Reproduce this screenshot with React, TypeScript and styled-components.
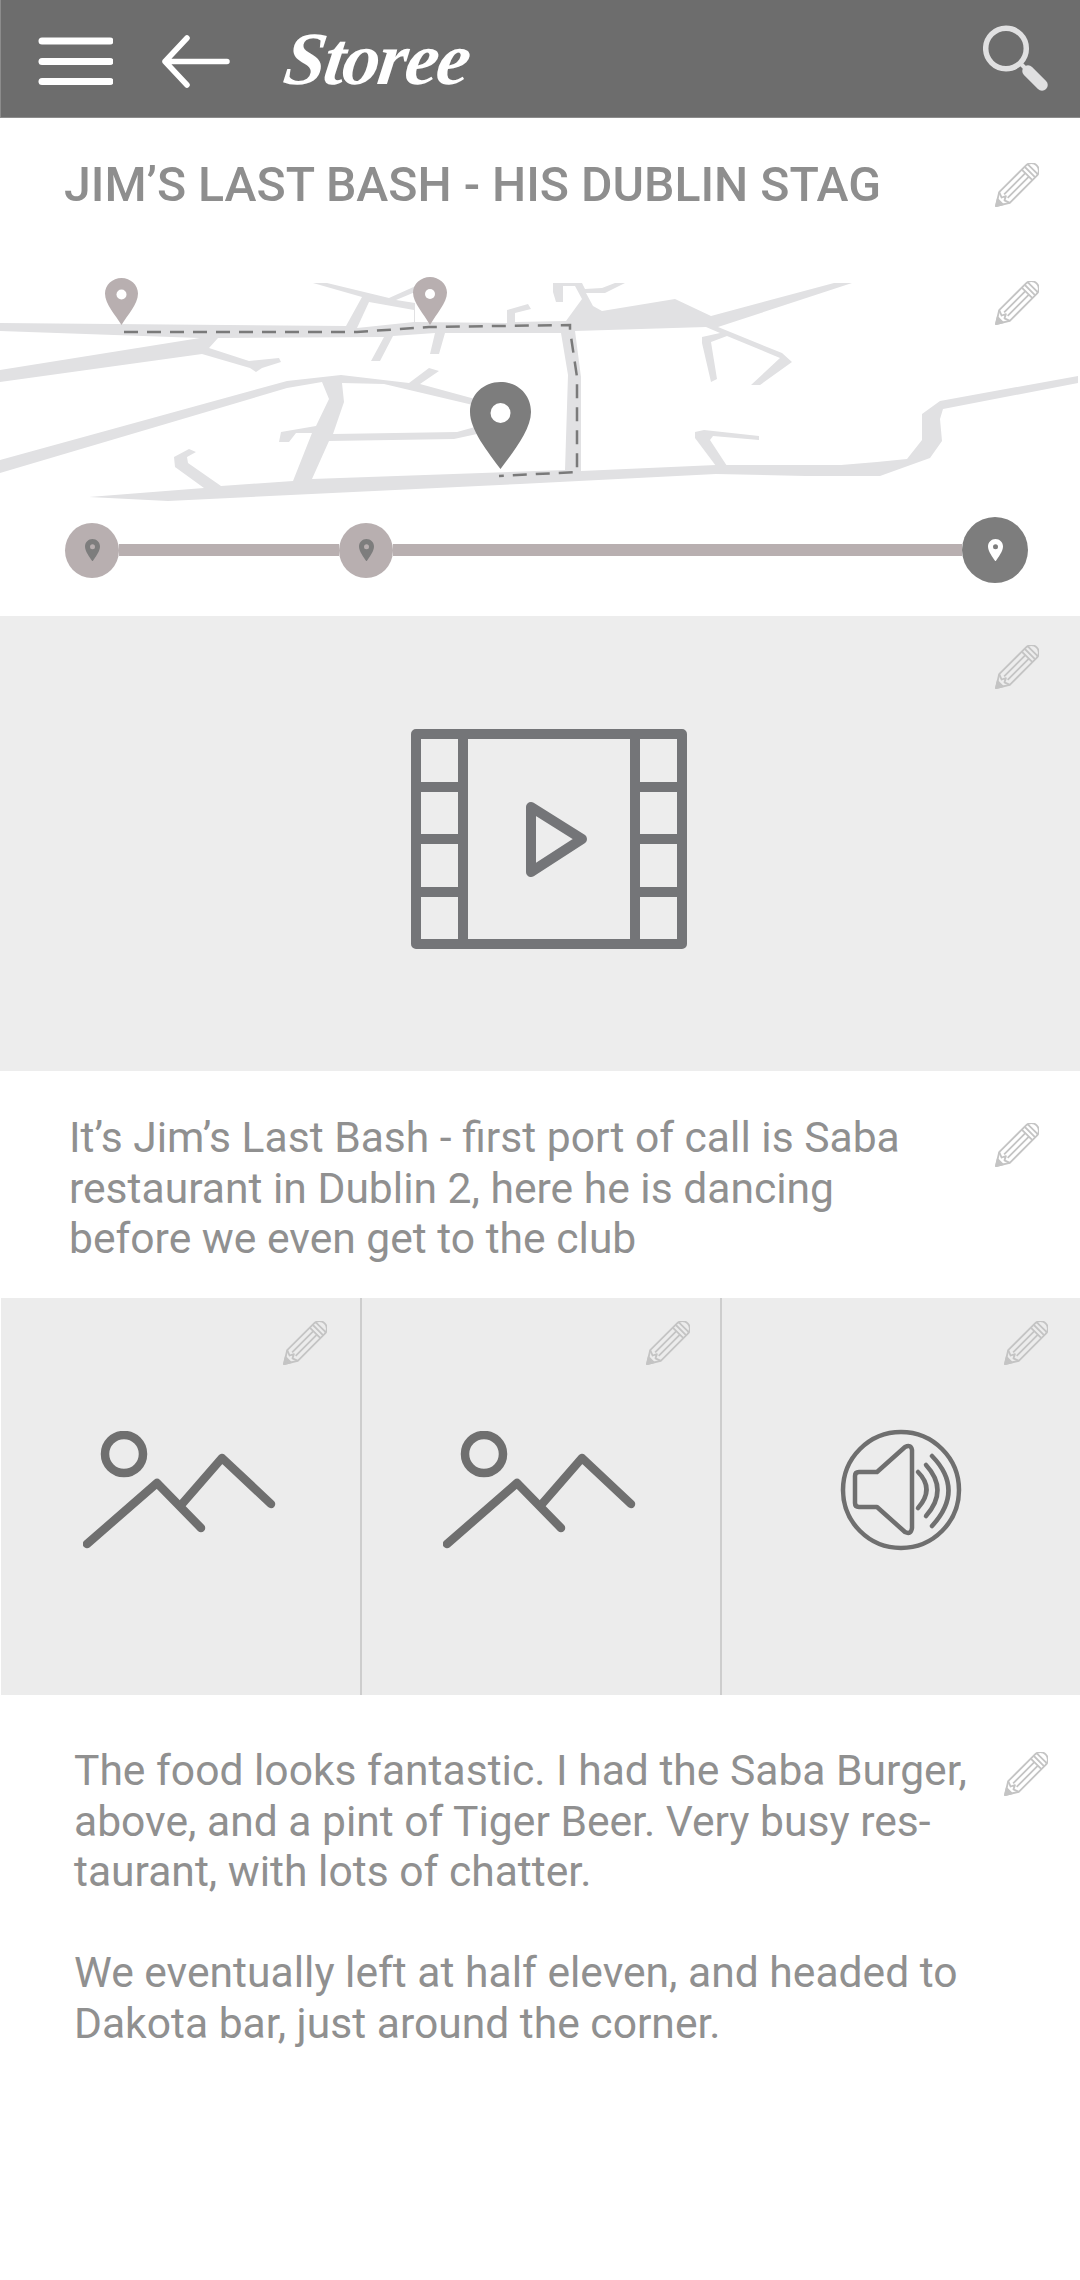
import React from 'react';
import styled, { createGlobalStyle } from 'styled-components';

const GlobalStyle = createGlobalStyle`
  html, body {
    margin: 0;
    padding: 0;
    background: #fff;
  }
  * {
    box-sizing: border-box;
  }
`;

const Page = styled.div`
  width: 1080px;
  height: 2280px;
  background: #fff;
  font-family: Roboto, sans-serif;
  overflow: hidden;
`;

const Header = styled.header`
  height: 118px;
  background: #6d6d6d;
  border-bottom: 1px solid #8c8c8c;
  border-left: 1px solid #8c8c8c;
  display: flex;
  align-items: center;
  padding: 0 31px 0 36px;
`;

const Logo = styled.div`
  margin-left: 55px;
  color: #fff;
  font-family: "Liberation Serif", serif;
  font-style: italic;
  font-weight: 700;
  font-size: 75px;
  line-height: 1;
  letter-spacing: -2px;
  transform: skewX(-8deg);
`;

const HeaderSpacer = styled.div`
  flex: 1;
`;

const Section = styled.section<{ $height: number }>`
  position: relative;
  height: ${({ $height }) => $height}px;
`;

const Title = styled.h1`
  margin: 0;
  padding: 39px 0 0 64px;
  color: #8e8e8e;
  font-size: 48.2px;
  font-weight: 500;
  line-height: 56px;
  white-space: nowrap;
`;

const Edit = styled.div<{ $top: number; $right: number }>`
  position: absolute;
  top: ${({ $top }) => $top}px;
  right: ${({ $right }) => $right}px;
  width: 44px;
  height: 44px;
`;

const MapBlock = styled.div`
  height: 246px;
`;

const Timeline = styled.div`
  height: 108px;
  padding: 0 52px 24px 65px;
  display: flex;
  align-items: center;
`;

const Stop = styled.div<{ $active?: boolean }>`
  width: ${({ $active }) => ($active ? 66 : 54)}px;
  height: ${({ $active }) => ($active ? 66 : 55)}px;
  flex: none;
  border-radius: 50%;
  background: ${({ $active }) => ($active ? '#7d7d7d' : '#b8afb0')};
  display: flex;
  align-items: center;
  justify-content: center;
`;

const Track = styled.div<{ $width?: number }>`
  flex: ${({ $width }) => ($width ? `0 0 ${$width}px` : '1')};
  height: 12px;
  background: #b8afb0;
`;

const VideoBlock = styled.section`
  position: relative;
  height: 455px;
  background: #ededed;
  display: flex;
  justify-content: center;
  padding: 113px 0 0 18px;
`;

const Paragraph = styled.p<{ $left: number }>`
  margin: 0;
  padding-left: ${({ $left }) => $left}px;
  color: #909090;
  font-size: 42.6px;
  font-weight: 400;
  line-height: 50.5px;
  white-space: pre-line;
`;

const TextBlock = styled.section<{ $height: number; $top: number }>`
  position: relative;
  height: ${({ $height }) => $height}px;
  padding-top: ${({ $top }) => $top}px;
`;

const MediaGrid = styled.section`
  height: 397px;
  display: grid;
  grid-template-columns: 362px 360px 358px;
`;

const MediaCell = styled.div<{ $pad: number; $top: number }>`
  position: relative;
  background: #ececec;
  border-right: 2px solid #cdcdcd;
  border-left: 1px solid #ececec;
  padding: ${({ $top }) => $top}px 0 0 ${({ $pad }) => $pad}px;
  &:nth-child(1) {
    border-left-color: #fff;
  }
  &:last-child {
    border-right: none;
  }
`;

const MenuIcon = () => (
  <svg width="76" height="56" viewBox="0 -6 76 56">
    <g stroke="#fff" strokeWidth="7" strokeLinecap="round">
      <line x1="5" y1="4" x2="73" y2="4" />
      <line x1="5" y1="24.5" x2="73" y2="24.5" />
      <line x1="5" y1="44.5" x2="73" y2="44.5" />
    </g>
  </svg>
);

const BackIcon = () => (
  <svg width="68" height="60" viewBox="0 -6 68 60" style={{ marginLeft: 49 }}>
    <path
      d="M25 3 L3 26.5 L25 50 M3 26.5 H65"
      fill="none"
      stroke="#fff"
      strokeWidth="5.5"
      strokeLinecap="round"
      strokeLinejoin="round"
    />
  </svg>
);

const SearchIcon = () => (
  <svg width="66" height="68" viewBox="0 0 66 68">
    <circle cx="23" cy="23.5" r="20.3" fill="none" stroke="#e0e0e1" strokeWidth="5.5" />
    <path d="M37 38 L43 44" stroke="#e0e0e1" strokeWidth="4" />
    <path d="M45 46 L59 60" stroke="#e0e0e1" strokeWidth="11.5" strokeLinecap="round" />
  </svg>
);

const PencilIcon = () => (
  <svg width="44" height="44" viewBox="0 0 44 44">
    <g
      transform="translate(1 43) rotate(-45)"
      fill="none"
      stroke="#c4c4c4"
      strokeWidth="1.8"
      strokeLinejoin="round"
    >
      <path d="M0 0 L12 -7.5 H50 A7.5 7.5 0 0 1 50 7.5 H12 Z" />
      <path d="M12 -7.5 L10 -2 L14 0 L10 2 L12 7.5" />
      <path d="M14 -2.5 H44 M14 2.5 H44" />
      <path d="M44 -7.5 V7.5 M48 -7.5 V7.5 M52 -7 V7" />
      <path d="M0 0 L6 -3.7 V3.7 Z" fill="#c4c4c4" />
    </g>
  </svg>
);

const Pin = ({ size, fill, hole }: { size: number; fill: string; hole: string }) => (
  <svg width={size} height={size * 1.5} viewBox="0 0 30 45">
    <path
      d="M15 0 C6.7 0 0 6.7 0 15 C0 25 10 37 15 45 C20 37 30 25 30 15 C30 6.7 23.3 0 15 0 Z"
      fill={fill}
    />
    <circle cx="15" cy="15.5" r="5" fill={hole} />
  </svg>
);

const roads = [
  '0,323 346,326 362,297 313,283 327,283 389,298 418,285 420,290 396,300 415,303 415,322 507,323 507,310 528,304 531,309 515,313 515,322 566,321 574,310 582,299 575,286 563,286 563,302 556,302 553,292 553,283 582,283 585,289 602,288 615,283 625,283 605,293 586,293 593,306 602,311 675,299 711,316 834,283 852,283 718,327 782,353 792,362 760,385 751,385 780,358 727,336 711,342 717,379 711,382 702,343 702,337 720,333 706,327 575,331 581,377 581,471 716,465 841,465 877,462 907,459 922,440 922,414 940,401 1078,376 1078,383 943,409 940,419 942,441 930,458 880,476 806,476 716,474 520,484 168,501 89,497 204,488 175,467 174,457 189,449 196,452 187,457 188,463 221,486 293,481 312,433 296,433 289,442 279,442 281,432 316,426 329,399 322,382 287,388 0,473 0,460 287,381 341,375 409,383 429,368 439,371 420,384 475,399 473,405 384,384 342,383 344,402 333,434 457,432 475,427 477,434 454,439 329,441 312,479 565,470 568,375 561,333 445,333 439,354 430,354 435,333 393,336 380,361 371,361 384,337 218,338 209,348 249,361 279,358 281,362 262,368 256,372 250,368 202,354 0,382 0,370 200,338 0,331',
  '695,432 704,430 759,436 759,440 713,436 710,440 727,466 716,466 695,438',
];

const holes = ['369,302 414,310 414,322 357,328'];

const RouteMap = () => (
  <svg width="1080" height="246" viewBox="0 262 1080 246" style={{ display: 'block' }}>
    {roads.map(points => (
      <polygon key={points} points={points} fill="#e1e1e3" />
    ))}
    {holes.map(points => (
      <polygon key={points} points={points} fill="#fff" />
    ))}
    <path
      d="M124 332 H357 L429 327 L570 325 V330 L577 377 V472 L499 476"
      fill="none"
      stroke="#7a7a7a"
      strokeWidth="2.5"
      strokeDasharray="14 9"
    />
    <g transform="translate(105 278)">
      <path d="M16.5 0 C7.5 0 0 7 0 15.5 C0 26 10.5 37 16.5 47 C22.5 37 33 26 33 15.5 C33 7 25.5 0 16.5 0 Z" fill="#b8afb0" />
      <circle cx="16.5" cy="16.5" r="5" fill="#fff" />
    </g>
    <g transform="translate(413 277)">
      <path d="M17 0 C8 0 0 7 0 15.5 C0 26 11 37 17 48 C23 37 34 26 34 15.5 C34 7 26 0 17 0 Z" fill="#b8afb0" />
      <circle cx="17" cy="17" r="5" fill="#fff" />
    </g>
    <g transform="translate(470 382)">
      <path d="M30.5 0 C13.5 0 0 12.5 0 30 C0 48 18 70 30.5 87 C43 70 61 48 61 30 C61 12.5 47.5 0 30.5 0 Z" fill="#7d7d7d" />
      <circle cx="30.5" cy="31" r="10" fill="#fff" />
    </g>
  </svg>
);

const VideoIcon = () => (
  <svg width="276" height="220" viewBox="0 0 276 220">
    <g
      fill="none"
      stroke="#747578"
      strokeWidth="10"
      strokeLinecap="round"
      strokeLinejoin="round"
    >
      <rect x="5" y="5" width="266" height="210" />
      <path d="M52 5 V215 M224 5 V215" strokeLinecap="butt" />
      <path
        d="M5 58 H52 M5 110 H52 M5 163 H52 M224 58 H271 M224 110 H271 M224 163 H271"
        strokeLinecap="butt"
      />
      <path d="M120 78 L171 110 L120 143 Z" />
    </g>
  </svg>
);

const ImageIcon = () => (
  <svg width="196" height="124" viewBox="0 0 196 124">
    <g fill="none" stroke="#6f6f6f" strokeWidth="8.5" strokeLinecap="round" strokeLinejoin="round">
      <circle cx="41" cy="19" r="19" transform="translate(0 4)" />
      <path d="M4 113 L74 52 L118 97" />
      <path d="M99 73 L139 27 L188 73" />
    </g>
  </svg>
);

const SoundIcon = () => (
  <svg width="122" height="122" viewBox="0 0 122 122">
    <g fill="none" stroke="#6f6f6f" strokeWidth="4.5" strokeLinecap="round" strokeLinejoin="round">
      <circle cx="61" cy="61" r="58" />
      <path d="M19 43 H37 L65 18 Q71 15 72 21 V99 Q71 106 65 103 L37 78 H19 Q15 78 15 74 V47 Q15 43 19 43 Z" />
      <path d="M78 43 Q95 60 78 79" />
      <path d="M86 36 Q109 61 86 87" />
      <path d="M92 27 Q125 61 92 97" />
    </g>
  </svg>
);

const App: React.FC = () => (
  <Page>
    <GlobalStyle />
    <Header>
      <MenuIcon />
      <BackIcon />
      <Logo>Storee</Logo>
      <HeaderSpacer />
      <SearchIcon />
    </Header>

    <Section $height={144}>
      <Title>JIM’S LAST BASH - HIS DUBLIN STAG</Title>
      <Edit $top={45} $right={41}>
        <PencilIcon />
      </Edit>
    </Section>

    <Section $height={354}>
      <MapBlock>
        <RouteMap />
      </MapBlock>
      <Timeline>
        <Stop>
          <Pin size={15} fill="#7d7d7d" hole="#b8afb0" />
        </Stop>
        <Track $width={220} />
        <Stop>
          <Pin size={15} fill="#7d7d7d" hole="#b8afb0" />
        </Stop>
        <Track />
        <Stop $active>
          <Pin size={15} fill="#fff" hole="#7d7d7d" />
        </Stop>
      </Timeline>
      <Edit $top={19} $right={41}>
        <PencilIcon />
      </Edit>
    </Section>

    <VideoBlock>
      <VideoIcon />
      <Edit $top={29} $right={41}>
        <PencilIcon />
      </Edit>
    </VideoBlock>

    <TextBlock $height={227} $top={41}>
      <Paragraph $left={69}>
        {'It’s Jim’s Last Bash - first port of call is Saba\nrestaurant in Dublin 2, here he is dancing\nbefore we even get to the club'}
      </Paragraph>
      <Edit $top={52} $right={41}>
        <PencilIcon />
      </Edit>
    </TextBlock>

    <MediaGrid>
      <MediaCell $pad={82} $top={133}>
        <ImageIcon />
        <Edit $top={23} $right={33}>
          <PencilIcon />
        </Edit>
      </MediaCell>
      <MediaCell $pad={80} $top={133}>
        <ImageIcon />
        <Edit $top={23} $right={30}>
          <PencilIcon />
        </Edit>
      </MediaCell>
      <MediaCell $pad={117} $top={131}>
        <SoundIcon />
        <Edit $top={23} $right={32}>
          <PencilIcon />
        </Edit>
      </MediaCell>
    </MediaGrid>

    <TextBlock $height={585} $top={50}>
      <Paragraph $left={74}>
        {'The food looks fantastic. I had the Saba Burger,\nabove, and a pint of Tiger Beer. Very busy res-\ntaurant, with lots of chatter.\n\nWe eventually left at half eleven, and headed to\nDakota bar, just around the corner.'}
      </Paragraph>
      <Edit $top={57} $right={32}>
        <PencilIcon />
      </Edit>
    </TextBlock>
  </Page>
);

export default App;
